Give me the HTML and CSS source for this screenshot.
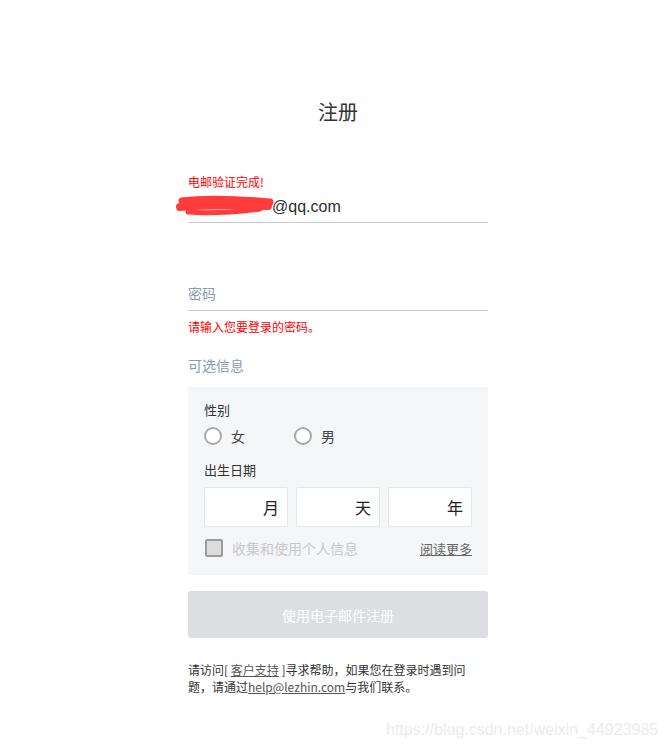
FILE: index.html
```html
<!DOCTYPE html>
<html lang="zh">
<head>
<meta charset="utf-8">
<title>注册</title>
<link rel="stylesheet" href="styles.css">
</head>
<body>
<div class="page">
  <h1 class="title">注册</h1>

  <div class="field field-email">
    <div class="ok-msg">电邮验证完成!</div>
    <div class="input email-input">
      <span class="email-text">@qq.com</span>
      <svg class="scribble" width="100" height="22" viewBox="0 0 100 22">
        <path d="M6 6 C30 3 60 4 94 7" stroke="#ff3b3b" stroke-width="7" fill="none" stroke-linecap="round"/>
        <path d="M4 12 C30 9 60 10 92 11" stroke="#ff3b3b" stroke-width="8" fill="none" stroke-linecap="round"/>
        <path d="M12 17 C36 19 60 17 84 14" stroke="#ff3b3b" stroke-width="5" fill="none" stroke-linecap="round"/>
      </svg>
    </div>
  </div>

  <div class="field field-pw">
    <div class="input"><span class="placeholder">密码</span></div>
    <div class="err-msg">请输入您要登录的密码。</div>
  </div>

  <div class="opt-label">可选信息</div>
  <div class="opt-box">
    <div class="sub-label">性别</div>
    <div class="radios">
      <label class="radio"><span class="circle"></span><span>女</span></label>
      <label class="radio"><span class="circle"></span><span>男</span></label>
    </div>
    <div class="sub-label birth">出生日期</div>
    <div class="dates">
      <div class="date">月</div>
      <div class="date">天</div>
      <div class="date">年</div>
    </div>
    <div class="consent">
      <span class="check"></span>
      <span class="consent-text">收集和使用个人信息</span>
      <a class="more">阅读更多</a>
    </div>
  </div>

  <button class="submit">使用电子邮件注册</button>

  <p class="help">请访问[ <a class="link">客户支持</a> ]寻求帮助，如果您在登录时遇到问题，请通过<a class="link">help@lezhin.com</a>与我们联系。</p>
</div>
<div class="watermark">https://blog.csdn.net/weixin_44923985</div>
</body>
</html>
```

FILE: styles.css
```css
html, body {
  margin: 0;
  padding: 0;
  background: #fff;
}
body {
  font-family: "Noto Sans CJK SC", "Liberation Sans", sans-serif;
  color: #333;
  width: 667px;
  height: 749px;
  position: relative;
  overflow: hidden;
}
.page {
  width: 300px;
  margin-left: 188px;
  padding-top: 98px;
}
.title {
  margin: 0;
  font-size: 20px;
  line-height: 28px;
  font-weight: 400;
  text-align: center;
  color: #333;
}
.field-email {
  margin-top: 49px;
}
.ok-msg {
  font-size: 12px;
  line-height: 14px;
  color: #f00;
}
.input {
  position: relative;
  height: 30px;
  border-bottom: 1px solid #c6cbd4;
  display: flex;
  align-items: center;
}
.email-input {
  height: 33px;
}
.email-text {
  font-family: "Liberation Sans", sans-serif;
  font-size: 16px;
  color: #2e2e2e;
  padding-left: 84px;
  padding-top: 2px;
}
.scribble {
  position: absolute;
  left: -12px;
  top: 6px;
}
.field-pw {
  margin-top: 57px;
}
.placeholder {
  font-size: 14px;
  color: #8c9ab0;
  padding-bottom: 5px;
}
.err-msg {
  margin-top: 8px;
  font-size: 12px;
  line-height: 16px;
  color: #f00;
}
.opt-label {
  margin-top: 20px;
  font-size: 14px;
  line-height: 20px;
  color: #8c9ab0;
}
.opt-box {
  margin-top: 12px;
  background: #f5f6f8;
  padding: 14px 16px 18px;
}
.sub-label {
  font-size: 13px;
  line-height: 18px;
  color: #333;
}
.radios {
  display: flex;
  margin-top: 8px;
  height: 18px;
  align-items: center;
}
.radio {
  display: flex;
  align-items: center;
  gap: 9px;
  width: 90px;
  font-size: 14px;
  color: #444;
}
.circle {
  width: 14px;
  height: 14px;
  border: 2px solid #aaa;
  border-radius: 50%;
  background: #fff;
}
.birth {
  margin-top: 16px;
}
.dates {
  display: flex;
  gap: 8px;
  margin-top: 8px;
}
.date {
  flex: 1;
  height: 38px;
  background: #fff;
  border: 1px solid #e3e6ea;
  border-radius: 2px;
  display: flex;
  align-items: center;
  justify-content: flex-end;
  padding-right: 8px;
  font-size: 16px;
  color: #222;
}
.consent {
  display: flex;
  align-items: center;
  margin-top: 12px;
  height: 18px;
}
.check {
  width: 14px;
  height: 14px;
  border: 2px solid #9c9c9c;
  border-radius: 2px;
  background: #dcdcdc;
  margin-left: 1px;
}
.consent-text {
  margin-left: 9px;
  font-size: 14px;
  color: #c8c8c8;
  flex: 1;
}
.more {
  font-size: 13px;
  color: #666;
  text-decoration: underline;
}
.submit {
  display: block;
  width: 300px;
  height: 47px;
  margin-top: 16px;
  border: none;
  border-radius: 3px;
  background: #dcdee1;
  color: #fff;
  font-family: "Noto Sans CJK SC", sans-serif;
  font-size: 14px;
}
.help {
  margin: 23px 0 0;
  font-size: 12px;
  line-height: 17px;
  color: #333;
  width: 290px;
}
.link {
  color: #555;
  text-decoration: underline;
}
.watermark {
  position: absolute;
  left: 386px;
  top: 721px;
  font-family: "Liberation Sans", sans-serif;
  font-size: 16px;
  white-space: nowrap;
  color: #ececec;
}
```
